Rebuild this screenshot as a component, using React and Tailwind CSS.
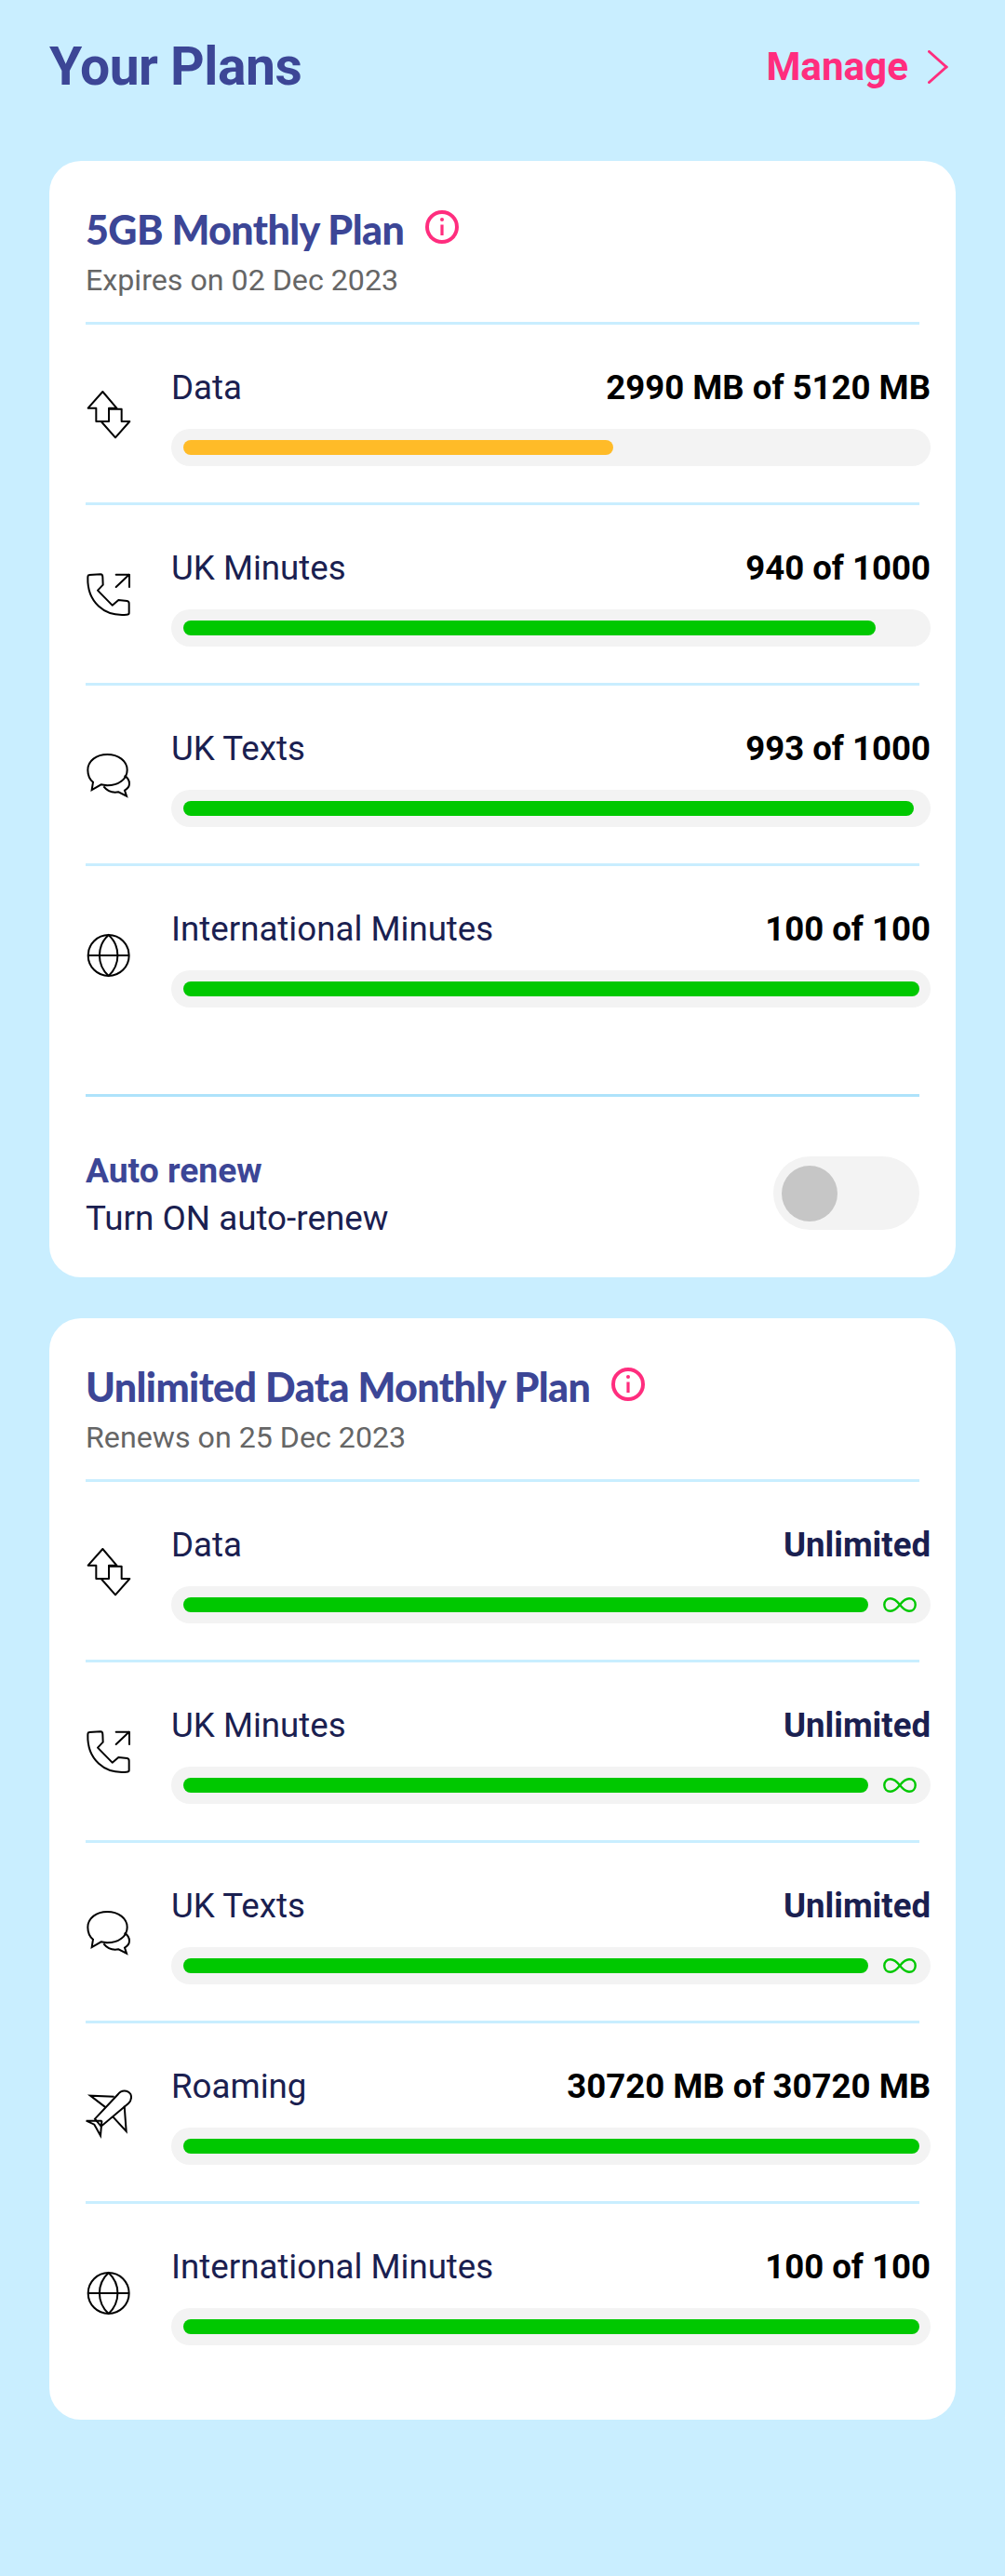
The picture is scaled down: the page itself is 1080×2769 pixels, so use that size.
const PINK = '#ff2d7e';

function DataIcon() {
  return (
    <svg viewBox="100 119 150 165" className="w-[50px] h-[55px]" fill="none" stroke="#000" strokeWidth="6" strokeLinejoin="round">
      <path d="M175 218 H134 V175 H108 L155 122 L200 175 H175 Z" />
      <path d="M175 218 V178 H216 V218 H242 L196 270 L150 218" />
    </svg>
  );
}

function PhoneIcon() {
  return (
    <svg viewBox="100 701 150 165" className="w-[50px] h-[55px]" fill="none" stroke="#000" strokeWidth="6" strokeLinejoin="round" strokeLinecap="round">
      <path d="M112 713 L148 711 Q155 711 155 720 L156 745 L139 763 L186 811 L206 794 L234 797 Q240 798 240 805 L240 836 Q240 841 232 841 C160 848 105 800 107 722 Q107 713 112 713 Z" />
      <path d="M198 752 L240 712 M198 712 H241 V752" />
    </svg>
  );
}

function ChatIcon() {
  return (
    <svg viewBox="100 83 150 165" className="w-[50px] h-[55px]" fill="none" stroke="#000" strokeWidth="6" strokeLinejoin="miter">
      <path d="M170 92 C205 92 234 112 234 142 C234 172 205 192 170 192 C163 192 158 190 150 189 L120 206 L124 181 C113 172 107 158 107 142 C107 112 135 92 170 92 Z" />
      <path d="M225 160 C237 168 241 177 241 186 C241 195 235 203 226 208 L232 226 L206 213 C185 217 170 210 158 195" />
    </svg>
  );
}

function GlobeIcon() {
  return (
    <svg viewBox="100 665 150 165" className="w-[50px] h-[55px]" fill="none" stroke="#000" strokeWidth="6">
      <circle cx="174" cy="740" r="66" />
      <path d="M174 674 C135 710 135 770 174 806 C213 770 213 710 174 674 Z" />
      <path d="M108 740 H240" />
    </svg>
  );
}

function PlaneIcon() {
  return (
    <svg viewBox="100 77 150 165" className="w-[50px] h-[55px]" fill="none" stroke="#000" strokeWidth="6" strokeLinejoin="miter">
      <path d="M130 172 L205 92 C215 78 235 78 245 92 C250 105 245 115 238 122 L150 196 Z" />
      <path d="M192 100 L115 97 L165 135" />
      <path d="M225 130 L231 212 L188 165" />
      <path d="M150 178 L102 178 L128 190 L148 226 L152 180 Z" />
    </svg>
  );
}

function InfoIcon() {
  return (
    <svg viewBox="0 0 36 36" className="w-[36px] h-[36px] shrink-0" fill="none" stroke={PINK} strokeWidth="4">
      <circle cx="18" cy="18" r="16" />
      <path d="M18 15.5 V27" strokeWidth="3.2" />
      <circle cx="18" cy="10" r="2" fill={PINK} stroke="none" />
    </svg>
  );
}

function Infinity() {
  return (
    <svg viewBox="0 0 36 16" className="w-[36px] h-[16px] shrink-0" fill="none" stroke="#00c800" strokeWidth="2.4">
      <path d="M18 8 C14 3 11 1.3 8 1.3 C4 1.3 1.3 4 1.3 8 C1.3 12 4 14.7 8 14.7 C11 14.7 14 13 18 8 C22 3 25 1.3 28 1.3 C32 1.3 34.7 4 34.7 8 C34.7 12 32 14.7 28 14.7 C25 14.7 22 13 18 8 Z" />
    </svg>
  );
}

function UsageRow({ icon, label, value, percent, color = 'bg-[#00c800]', unlimited }) {
  return (
    <div className="h-[194px] border-t-[3px] border-[#c9eeff] flex">
      <div className="w-[92px] shrink-0 pt-[71px]">{icon}</div>
      <div className="w-[816px] shrink-0 pt-[44px] -mr-[12px]">
        <div className="flex justify-between items-baseline h-[48px] leading-[48px]">
          <span className="text-[36.7px] text-[#1a2050]">{label}</span>
          <span className={`text-[36.6px] font-bold ${unlimited ? 'text-[#1a2050]' : 'text-black'}`}>{value}</span>
        </div>
        <div className={`mt-[20px] h-[40px] rounded-full bg-[#f3f3f3] flex items-center pl-[13px] ${unlimited ? 'pr-[15px]' : 'pr-[12px]'}`}>
          {unlimited ? (
            <>
              <div className="h-[16px] flex-1 rounded-full bg-[#00c800]" />
              <div className="ml-[16px]"><Infinity /></div>
            </>
          ) : (
            <div className="flex-1">
              <div className={`h-[16px] rounded-full ${color}`} style={{ width: `${percent}%` }} />
            </div>
          )}
        </div>
      </div>
    </div>
  );
}

function PlanHeader({ title, sub }) {
  return (
    <div className="h-[173px] pt-[46px]">
      <div className="flex items-start h-[60px]">
        <h2 className="text-[43px] leading-[56px] font-black tracking-[-0.6px] text-[#3c4696] font-['Lato',sans-serif]">{title}</h2>
        <div className="ml-[23px] mt-[7px]"><InfoIcon /></div>
      </div>
      <p className="text-[32.2px] leading-[36px] text-[#666666] mt-[4px]">{sub}</p>
    </div>
  );
}

export default function App() {
  return (
    <div className="h-[2769px] bg-[#c9eeff] px-[53px] font-['Roboto',sans-serif]">
      <div className="h-[173px] flex pt-[36px] justify-between items-start">
        <h1 className="text-[57px] leading-[72px] font-bold tracking-[-0.5px] text-[#3c4696]">Your Plans</h1>
        <div className="flex items-center h-[72px] pr-[8px]">
          <span className="text-[42.2px] font-bold text-[#ff2d7e]">Manage</span>
          <svg viewBox="0 0 22 36" className="w-[22px] h-[36px] ml-[21px]" fill="none" stroke={PINK} strokeWidth="3" strokeLinecap="round">
            <path d="M1.5 1.5 L20 18 L1.5 34.5" />
          </svg>
        </div>
      </div>

      <div className="bg-white rounded-[34px] px-[39px] h-[1200px]">
        <PlanHeader title="5GB Monthly Plan" sub="Expires on 02 Dec 2023" />
        <UsageRow icon={<DataIcon />} label="Data" value="2990 MB of 5120 MB" percent={58.4} color="bg-[#ffbb28]" />
        <UsageRow icon={<PhoneIcon />} label="UK Minutes" value="940 of 1000" percent={94} />
        <UsageRow icon={<ChatIcon />} label="UK Texts" value="993 of 1000" percent={99.3} />
        <UsageRow icon={<GlobeIcon />} label="International Minutes" value="100 of 100" percent={100} />
        <div className="mt-[54px] border-t-[3px] border-[#aee3fb] pt-[64px] flex justify-between">
          <div className="-mt-[8px]">
            <div className="text-[37.2px] leading-[46px] font-bold text-[#3c4696]">Auto renew</div>
            <div className="text-[36.8px] leading-[46px] text-[#1a2050] mt-[6px]">Turn ON auto-renew</div>
          </div>
          <div className="w-[157px] h-[79px] rounded-full bg-[#f3f3f3] flex items-center pl-[9px]">
            <div className="w-[60px] h-[60px] rounded-full bg-[#c6c6c6]" />
          </div>
        </div>
      </div>

      <div className="bg-white rounded-[34px] px-[39px] mt-[44px] h-[1184px]">
        <PlanHeader title="Unlimited Data Monthly Plan" sub="Renews on 25 Dec 2023" />
        <UsageRow icon={<DataIcon />} label="Data" value="Unlimited" unlimited />
        <UsageRow icon={<PhoneIcon />} label="UK Minutes" value="Unlimited" unlimited />
        <UsageRow icon={<ChatIcon />} label="UK Texts" value="Unlimited" unlimited />
        <UsageRow icon={<PlaneIcon />} label="Roaming" value="30720 MB of 30720 MB" percent={100} />
        <UsageRow icon={<GlobeIcon />} label="International Minutes" value="100 of 100" percent={100} />
      </div>
    </div>
  );
}
